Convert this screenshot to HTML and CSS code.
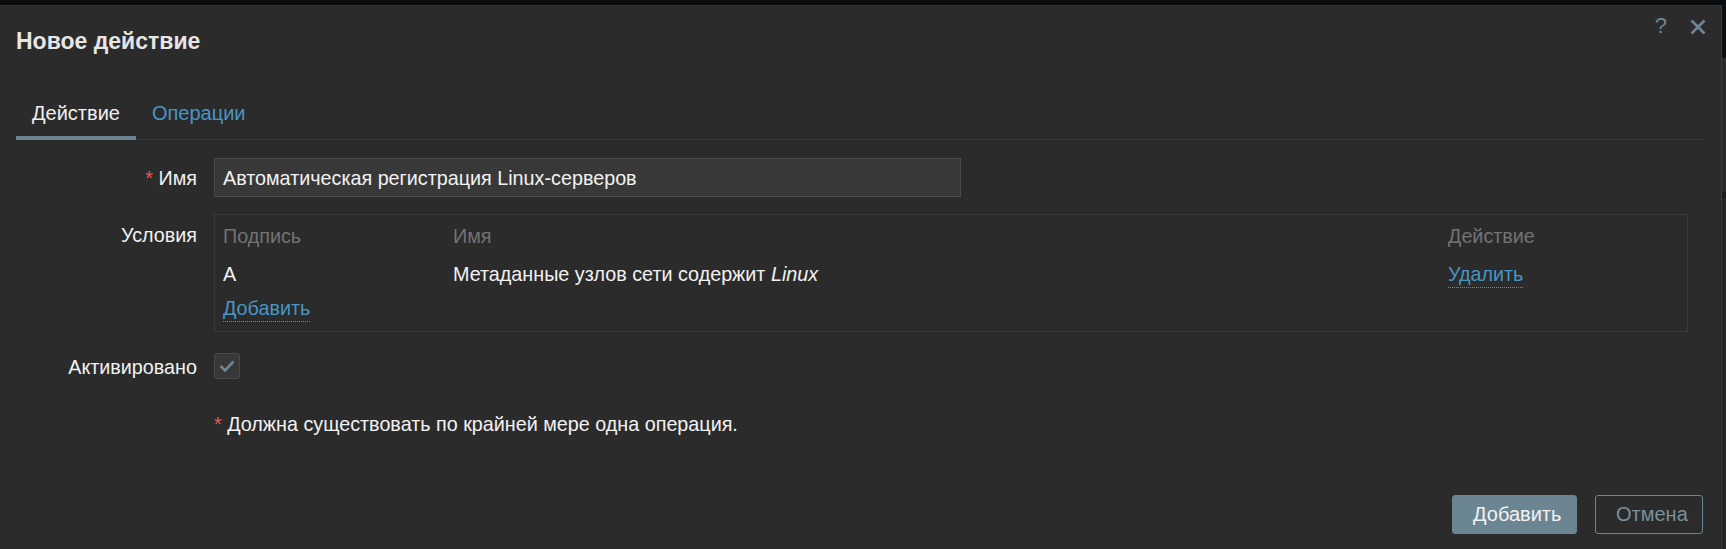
FILE: index.html
```html
<!DOCTYPE html>
<html lang="ru">
<head>
<meta charset="utf-8">
<title>Новое действие</title>
<link rel="stylesheet" href="styles.css">
</head>
<body>
<div class="page">
  <div class="dialog">
    <div class="dialog-header">
      <h4 class="dialog-title">Новое действие</h4>
      <div class="header-controls">
        <span class="help-btn">?</span>
        <span class="close-btn">
          <svg width="16" height="16" viewBox="0 0 16 16"><path d="M1.5 1.5 L14.5 14.5 M14.5 1.5 L1.5 14.5" stroke="#6d8592" stroke-width="2.8" fill="none"/></svg>
        </span>
      </div>
    </div>

    <div class="tabs">
      <span class="tab tab-active">Действие</span>
      <span class="tab tab-link">Операции</span>
    </div>

    <div class="form-grid">
      <label class="form-label label-input"><span class="req">*</span> Имя</label>
      <div class="form-field">
        <div class="text-input">Автоматическая регистрация Linux-серверов</div>
      </div>

      <label class="form-label label-table">Условия</label>
      <div class="form-field field-table">
        <div class="cond-table">
          <div class="cond-row cond-head">
            <span>Подпись</span><span>Имя</span><span>Действие</span>
          </div>
          <div class="cond-row cond-item">
            <span>A</span><span>Метаданные узлов сети содержит <i>Linux</i></span><span><a class="link">Удалить</a></span>
          </div>
          <div class="cond-row cond-add">
            <span><a class="link">Добавить</a></span>
          </div>
        </div>
      </div>

      <label class="form-label label-check">Активировано</label>
      <div class="form-field field-check">
        <span class="checkbox">
          <svg width="16" height="12" viewBox="0 0 16 12"><path d="M1.5 6 L6 10.5 L14.5 1.5" stroke="#6d8592" stroke-width="2.6" fill="none"/></svg>
        </span>
      </div>

      <div class="form-field field-note"><span class="req">*</span> Должна существовать по крайней мере одна операция.</div>
    </div>

    <div class="dialog-footer">
      <button class="btn btn-primary">Добавить</button>
      <button class="btn btn-alt">Отмена</button>
    </div>
  </div>
  <div class="backdrop-strip"></div>
</div>
</body>
</html>
```

FILE: styles.css
```css
html, body {
  margin: 0;
  padding: 0;
  background: #0b0c0e;
  font-family: "Liberation Sans", Arial, sans-serif;
  color: #f2f2f2;
}

.page {
  display: flex;
  width: 1726px;
  height: 549px;
  overflow: hidden;
}

.dialog {
  margin-top: 5px;
  width: 1722px;
  height: 544px;
  box-sizing: border-box;
  background: #2b2b2b;
  border-top: 1px solid #353535;
  border-right: 1px solid #393939;
  display: flex;
  flex-direction: column;
}

.backdrop-strip {
  flex: 1;
  background: linear-gradient(to bottom, #0d0e10 0, #0d0e10 58px, #2a2a2a 58px, #2a2a2a 192px, #1b1b1b 192px, #1b1b1b 198px, #262626 198px, #262626 100%);
}

.dialog-header {
  display: flex;
  justify-content: space-between;
  align-items: flex-start;
  padding: 9px 15px 0 16px;
}

.dialog-title {
  margin: 12px 0 0 0;
  font-size: 23px;
  line-height: 28px;
  font-weight: bold;
  color: #e6e6e6;
}

.header-controls {
  display: flex;
  align-items: center;
  gap: 23px;
}

.help-btn {
  font-size: 22px;
  line-height: 22px;
  color: #6d8592;
}

.close-btn {
  display: flex;
  margin-top: 2px;
}

.tabs {
  display: flex;
  margin: 46px 18px 0 16px;
  border-bottom: 1px solid #3a3a3a;
}

.tab {
  font-size: 20px;
  line-height: 24px;
  padding: 0 16px 11px 16px;
  border-bottom: 4px solid transparent;
  margin-bottom: -1px;
}

.tab-active {
  color: #f0f0f0;
  border-bottom-color: #6c8592;
}

.tab-link {
  color: #4796c4;
}

.form-grid {
  display: grid;
  grid-template-columns: 181px 1474px;
  column-gap: 17px;
  padding-left: 16px;
  margin-top: 18px;
  font-size: 19.75px;
}

.form-label {
  text-align: right;
  color: #f2f2f2;
  line-height: 24px;
}

.req {
  color: #e45959;
}

.label-input {
  line-height: 38px;
  padding-top: 1px;
}

.text-input {
  width: 747px;
  height: 39px;
  box-sizing: border-box;
  background: #383838;
  border: 1px solid #4a4a4a;
  padding: 1px 8px 0 8px;
  line-height: 37px;
  color: #f2f2f2;
}

.label-table,
.field-table {
  margin-top: 17px;
}

.label-table {
  padding-top: 9px;
}

.cond-table {
  border: 1px solid #383838;
  box-sizing: border-box;
  height: 118px;
  padding: 9px 8px 0 8px;
}

.cond-row {
  display: grid;
  grid-template-columns: 230px 995px 1fr;
  line-height: 24px;
}

.cond-head {
  color: #737373;
  height: 38px;
}

.cond-item {
  height: 34px;
}

.link {
  color: #4796c4;
  border-bottom: 1px dotted #4796c4;
  padding-bottom: 2px;
}

.label-check,
.field-check {
  margin-top: 21px;
}

.label-check {
  line-height: 28px;
}

.checkbox {
  display: flex;
  align-items: center;
  justify-content: center;
  width: 26px;
  height: 26px;
  box-sizing: border-box;
  background: #383838;
  border: 1px solid #4a4a4a;
  border-radius: 3px;
}

.field-note {
  grid-column: 2;
  margin-top: 31px;
  line-height: 24px;
  color: #f2f2f2;
}

.dialog-footer {
  margin-top: auto;
  display: flex;
  justify-content: flex-end;
  gap: 18px;
  padding: 0 18px 15px 0;
}

.btn {
  height: 39px;
  padding: 0 20px;
  font-family: "Liberation Sans", Arial, sans-serif;
  font-size: 20px;
  border-radius: 3px;
  box-sizing: border-box;
}

.btn-primary {
  background: #6c8592;
  border: 1px solid #6c8592;
  color: #f2f2f2;
  width: 125px;
}

.btn-alt {
  background: transparent;
  border: 1px solid #6c8592;
  color: #7a8f9b;
  width: 108px;
}
```
